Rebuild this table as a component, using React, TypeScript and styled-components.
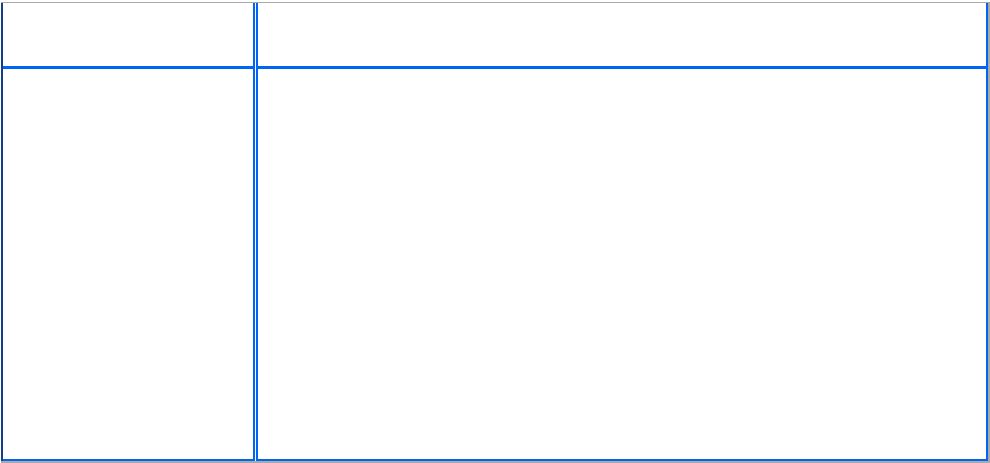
import React from "react";
import styled, { createGlobalStyle } from "styled-components";

const Global = createGlobalStyle`
  html, body { margin: 0; padding: 0; background: #ffffff; }
  body { font-family: "Liberation Sans", Arial, sans-serif; }
`;

const Page = styled.div`
  width: 990px;
  height: 463px;
  box-sizing: border-box;
  padding: 2px 0 0 1px;
  background: #ffffff;
`;

const Frame = styled.div`
  box-sizing: border-box;
  width: 989px;
  height: 461px;
  border-top: 1px solid #a9a9a9;
  border-right: 2px solid #a9a9a9;
  border-bottom: 2px solid #a9a9a9;
  display: grid;
  grid-template-columns: 254px 1fr;
  column-gap: 1px;
`;

const Pane = styled.div<{ $edge: string }>`
  box-sizing: border-box;
  display: flex;
  flex-direction: column;
  border-left: 2px solid ${(p) => p.$edge};
  border-right: 2px solid #0064f5;
`;

const Cell = styled.div<{ $grow?: boolean }>`
  box-sizing: border-box;
  border-bottom: ${(p) => (p.$grow ? "2px" : "3px")} solid #0064f5;
  height: ${(p) => (p.$grow ? "auto" : "66px")};
  flex: ${(p) => (p.$grow ? 1 : "none")};
`;

export default function App() {
  return (
    <>
      <Global />
      <Page>
        <Frame>
          <Pane $edge="#143d8c">
            <Cell />
            <Cell $grow />
          </Pane>
          <Pane $edge="#0064f5">
            <Cell />
            <Cell $grow />
          </Pane>
        </Frame>
      </Page>
    </>
  );
}
